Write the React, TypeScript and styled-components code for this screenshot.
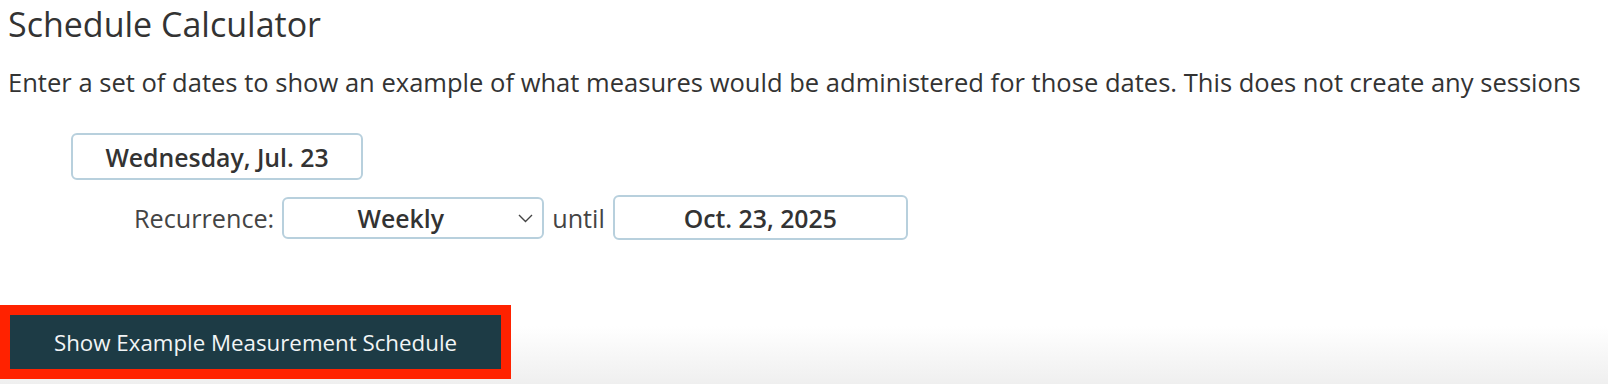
import React, { useState } from 'react';
import styled, { createGlobalStyle } from 'styled-components';

const GlobalStyle = createGlobalStyle`
  html, body {
    margin: 0;
    padding: 0;
    background: #ffffff;
  }
  body {
    font-family: "Open Sans", "Liberation Sans", sans-serif;
    color: #333333;
  }
`;

const Page = styled.div`
  width: 1608px;
  height: 384px;
  box-sizing: border-box;
  padding: 2px 8px 0;
  background: linear-gradient(to bottom, #ffffff 0px, #ffffff 326px, #efefef 384px);
  overflow: hidden;
`;

const Title = styled.h2`
  margin: 0;
  font-size: 34px;
  font-weight: 400;
  line-height: 44px;
  color: #333333;
  white-space: nowrap;
`;

const Intro = styled.p`
  margin: 19px 0 0;
  font-size: 25.55px;
  line-height: 34px;
  color: #333333;
  white-space: nowrap;
`;

const Form = styled.div`
  display: flex;
  flex-direction: column;
  align-items: flex-start;
  gap: 15px;
  margin-top: 34px;
  padding-left: 63px;
`;

const Field = styled.div<{ $width: number; $height: number }>`
  box-sizing: border-box;
  width: ${p => p.$width}px;
  height: ${p => p.$height}px;
  border: 2px solid #b8d0dd;
  border-radius: 6px;
  display: flex;
  align-items: center;
  justify-content: center;
  font-size: 24.8px;
  font-weight: 550;
  color: #333333;
  background: #ffffff;
  white-space: nowrap;
`;

const RecurrenceRow = styled.div`
  display: flex;
  align-items: center;
  gap: 8px;
  padding-left: 63px;
`;

const Label = styled.span`
  font-size: 25.2px;
  color: #444444;
  white-space: nowrap;
`;

const Select = styled.div`
  position: relative;
  box-sizing: border-box;
  width: 262px;
  height: 42px;
  border: 2px solid #b8d0dd;
  border-radius: 6px;
  display: flex;
  align-items: center;
  justify-content: center;
  padding-right: 25px;
  font-size: 24.8px;
  font-weight: 550;
  color: #333333;
`;

const Chevron = styled.svg`
  position: absolute;
  right: 8px;
  top: 50%;
  margin-top: -6px;
`;

const Actions = styled.div`
  margin-top: 65px;
  margin-left: -8px;
`;

const Highlight = styled.div`
  display: inline-block;
  border: 10px solid #ff2200;
`;

const Button = styled.button`
  box-sizing: border-box;
  width: 491px;
  height: 54px;
  border: none;
  padding: 0;
  background: #1d3b45;
  color: #f2f5f6;
  font-family: "Open Sans", "Liberation Sans", sans-serif;
  font-size: 22.3px;
  cursor: pointer;
  display: block;
`;

export default function App() {
  const [recurrence] = useState('Weekly');

  return (
    <>
      <GlobalStyle />
      <Page>
        <Title>Schedule Calculator</Title>
        <Intro>
          Enter a set of dates to show an example of what measures would be administered for those dates. This does not create any sessions
        </Intro>
        <Form>
          <Field $width={292} $height={47}>Wednesday, Jul. 23</Field>
          <RecurrenceRow>
            <Label>Recurrence:</Label>
            <Select>
              {recurrence}
              <Chevron width="17" height="12" viewBox="0 0 17 12">
                <path d="M2 3 L8.5 9.5 L15 3" fill="none" stroke="#444" strokeWidth="1.4" />
              </Chevron>
            </Select>
            <Label>until</Label>
            <Field $width={295} $height={45}>Oct. 23, 2025</Field>
          </RecurrenceRow>
        </Form>
        <Actions>
          <Highlight>
            <Button>Show Example Measurement Schedule</Button>
          </Highlight>
        </Actions>
      </Page>
    </>
  );
}
